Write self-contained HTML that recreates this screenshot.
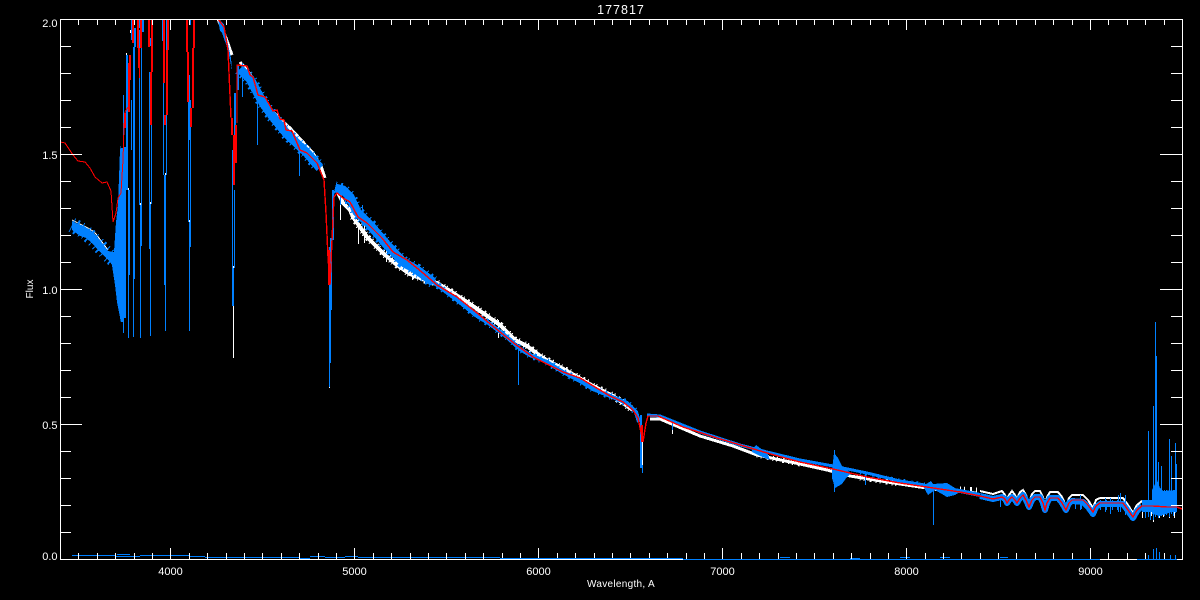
<!DOCTYPE html>
<html><head><meta charset="utf-8"><title>177817</title>
<style>html,body{margin:0;padding:0;background:#000;width:1200px;height:600px;overflow:hidden}svg{display:block}text{font-family:"Liberation Sans",sans-serif;fill:#fff}</style></head>
<body>
<svg width="1200" height="600" viewBox="0 0 1200 600" xmlns="http://www.w3.org/2000/svg">
<rect width="1200" height="600" fill="#000"/>
<clipPath id="c"><rect x="60" y="19" width="1122" height="541"/></clipPath>
<g clip-path="url(#c)" shape-rendering="crispEdges" fill="none">
<!-- white spectrum -->
<path stroke="#fff" stroke-width="3" d="M218,19 L226,38 L232,55 M240,62 L250,74 L260,94 L270,109 L280,119 L290,128 L303,142 L313,153 L321,166 L325,178"/>
<path stroke="#fff" stroke-width="4" d="M337,190 L343,203 L350,210 L353,217 L367,237 L383,253 L397,265 L410,274 L425,280 L437,283 L450,291 L473,306 L500,325 L515,340 L527,346 L543,358 L567,371 L593,386 L613,396 L633,410"/>
<path stroke="#fff" stroke-width="7" stroke-dasharray="1 4 2 3 1 6 1 2" d="M353,217 L367,237 L383,253 L397,265 L410,274 L425,280 L437,283 L450,291 L473,306 L500,325 L515,340 L527,346 L543,358 L567,371 L593,386 L613,396 L633,410"/>
<path stroke="#fff" stroke-width="3" d="M650,419 L660,419 L700,436 L733,446 L757,455 L800,464 L827,470 L850,476 L900,484 L940,490 L977,493"/>
<path stroke="#fff" stroke-width="5" stroke-dasharray="1 3 1 5 2 4" d="M757,455 L800,464 M860,478 L900,484 M960,489 L977,490"/>
<path stroke="#fff" stroke-width="2" d="M980,491 L993,494 L1002,491 L1005,495 L1007,499 L1009,495 L1012,491 L1015,495 L1017,499 L1020,492 L1023,490 L1026,495 L1029,503 L1032,494 L1035,491 L1040,491 L1043,497 L1045,506 L1047,497 L1050,492 L1058,492 L1062,497 L1066,506 L1069,498 L1072,495 L1083,495 L1088,500 L1093,508 L1096,500 L1100,498 L1123,498 L1128,505 L1133,513 L1137,505 L1142,501 L1177,503"/>
<path stroke="#fff" stroke-width="1" d="M233.5,306V358 M329.5,300V388 M340.5,190V220 M358.5,218V244 M364.5,225V243 M386.5,250V262 M390.5,250V260 M412.5,268V280 M498.5,320V338 M642.5,440V473 M672.5,425V434 M834.5,470V492 M933.5,495V525 M1153.5,500V522 M1159.5,500V518 M1169.5,500V518 M1148.5,510V517 M1142.5,505V518 M1146.5,505V512 M1163.5,505V517 M1174.5,505V518 M1151.5,505V516"/>
<path stroke="#fff" stroke-width="1" d="M72,220 L78,223 L90,229 L96,234 L102,242 L108,250"/>
<path stroke="#fff" stroke-width="1" d="M123.5,143V146 M128.5,188V191 M133.5,183V186 M140.5,203V206 M150.5,202V205 M165.5,173V176 M189.5,220V223 M233.5,266V269 M126.5,53V56 M130.5,30V33"/>
<!-- blue spectrum -->
<g fill="#0080ff">
<polygon points="72,221 78,224 84,226 90,230 96,235 102,243 108,251 114,252 115,237 116,222 118,205 120,150 121,145 121,323 119,312 117,302 115,285 113,272 112,265 110,262 104,256 98,250 92,243 86,238 80,236 72,230"/>
<polygon points="218,19 224,24 228,44 231,58 232,70 228,50 222,33 220,31"/>
<polygon points="832,470 834,453 838,458 842,466 847,470 851,473 847,477 842,484 835,488 832,478"/>
<polygon points="752,449 756,445 760,448 768,454 770,460 760,456 752,452"/>
<polygon points="923,486 931,481 933,484 947,483 955,488 960,492 955,495 947,497 935,490 928,495"/>
<polygon points="1152,490 1157,480 1160,488 1163,491 1177,490 1177,510 1160,516 1152,514"/>
<polygon points="1142,500 1177,500 1177,512 1142,512"/>
</g>
<path stroke="#0080ff" stroke-width="15" stroke-dasharray="1 3 2 4 1 5" d="M72,225 L84,231 L96,242 L108,255 L113,259"/>
<!-- blue continuum -->
<path stroke="#0080ff" stroke-width="9" d="M240,69 L250,79 L263,103 L273,117 L287,134 L307,153 L320,168"/>
<path stroke="#0080ff" stroke-width="13" stroke-dasharray="1 4 2 3 1 5" d="M240,69 L250,79 L263,103 L273,117 L287,134 L307,153 L320,168"/>
<path stroke="#0080ff" stroke-width="9" d="M335,188 L343,190 L350,197 L357,212 L370,225 L387,245 L403,262 L417,270 L433,282"/>
<path stroke="#0080ff" stroke-width="13" stroke-dasharray="1 4 2 3 1 5" d="M335,188 L343,190 L350,197 L357,212 L370,225 L387,245 L403,262 L417,270 L433,282"/>
<path stroke="#0080ff" stroke-width="4" d="M433,282 L457,300 L477,316 L490,324 L507,337 L520,349 L530,355 L547,362 L563,372 L580,381 L593,389 L610,396 L627,403 L636,412 L639,422"/>
<path stroke="#0080ff" stroke-width="7" stroke-dasharray="1 5 2 4 1 7" d="M433,282 L457,300 L477,316 L490,324 L507,337 L520,349 L530,355 L547,362 L563,372 L580,381 L593,389 L610,396 L627,403 L636,412"/>
<path stroke="#0080ff" stroke-width="3" d="M647,415 L660,416 L700,432 L740,445 L767,452 L800,460 L833,466 L867,473 L900,481 L925,485"/>
<path stroke="#0080ff" stroke-width="5" stroke-dasharray="1 4 2 6" d="M860,473 L900,481 L925,485"/>
<path stroke="#0080ff" stroke-width="4" d="M925,486 L940,488 L960,491 L980,495"/>
<path stroke="#0080ff" stroke-width="6" stroke-linejoin="round" d="M980,496 L993,499 L1002,497 L1005,499 L1007,503 L1009,500 L1012,497 L1015,500 L1017,503 L1020,498 L1023,495 L1026,500 L1029,507 L1032,500 L1035,497 L1040,497 L1043,503 L1045,510 L1047,503 L1050,498 L1058,498 L1062,503 L1066,510 L1069,503 L1072,501 L1083,502 L1088,507 L1093,514 L1096,507 L1100,504 L1123,504 L1128,511 L1133,518 L1137,511 L1142,506"/>
<path stroke="#0080ff" stroke-width="10" stroke-dasharray="1 4 2 5" d="M1075,504 L1083,504 M1100,505 L1123,505"/>
<!-- blue absorption columns -->
<path stroke="#0080ff" stroke-width="2" d="M122,148V322 M125,147V318 M127,55V190 M129,190V275 M132,19V40 M134,47V279 M135,28V47 M139,19V28 M140,30V48 M143,19V32 M141,205V246 M150,204V249 M150,38V46 M163,19V41 M164,53V83 M165,175V285 M167,19V50 M187,19V29 M189,75V140 M190,222V247 M190,19V25 M233,268V306 M235,93V150 M238,65V90 M330,247V363 M331,238V310 M333,190V240 M641,415V468 M1156,356V513"/>
<path stroke="#0080ff" stroke-width="1" d="M123.5,95V333 M128.5,190V338 M133.5,275V337 M131.5,100V150 M139.5,48V205 M141.5,48V205 M140.5,245V338 M149.5,72V204 M151.5,72V204 M150.5,245V336 M163.5,83V175 M166.5,50V175 M165.5,280V331 M188.5,140V222 M190.5,100V222 M189.5,245V331 M232.5,150V268 M234.5,190V268 M233.5,300V306 M329.5,360V387 M642.5,465V473 M242.5,63V97 M257.5,102V145 M299.5,147V176 M518.5,345V385 M340.5,190V205 M672.5,423V430 M865.5,475V485 M933.5,487V525 M834.5,450V492 M1148.5,431V517 M1153.5,406V520 M1155.5,322V517 M1158.5,462V518 M1161.5,466V516 M1166.5,490V515 M1169.5,439V517 M1171.5,456V514 M1173.5,490V516 M1175.5,443V513 M1176.5,464V512 M345.5,190V204 M362.5,205V225 M375.5,225V238 M395.5,245V258 M1000.5,495V507 M1080.5,495V510 M1105.5,498V512 M1110.5,498V514 M1118.5,495V512 M1120.5,493V512 M1125.5,495V515 M1145.5,502V518 M1150.5,500V520 M1164.5,490V516"/>
<!-- bottom spectrum -->
<path stroke="#0080ff" stroke-width="1" d="M72,555.5H115 M115,556.5H140 M140,555.5H190 M190,556.5H205 M205,557.5H300 M300,558.5H310 M310,556.5H325 M325,557.5H345 M345,556.5H358 M358,557.5H500 M117,554.5H130 M1153.5,549V559 M1156.5,548V559 M1159.5,552V559 M1148.5,555V559 M1170.5,555V559 M1175.5,555V559 M850,558.5H860 M940,557.5H950 M780,557.5H790 M900,557.5H910 M1000,557.5H1008"/>
<!-- red model -->
<path stroke="#f00" stroke-width="1" d="M60.5,142 L65,143 L73,155 L78,161 L85,162 L90,168 L95,177 L102,183 L107,182 L111,191 L113,222 L116,213 L118,198 L121,193 L123,160 L124,127 L125,112 L128,107"/>
<path stroke="#f00" stroke-width="2" d="M125,113V128 M129,63V112 M130,55V80 M133,19V43 M138,19V48 M139,48V68 M141,19V48 M149,19V47 M151,72V125 M152,19V72 M164,19V83 M165,115V125 M167,50V115 M168,19V50 M187,19V52 M188,52V102 M191,108V127 M193,48V108 M194,19V48 M232,118V135 M234,135V185 M236,125V163"/>
<path stroke="#f00" stroke-width="1" d="M139.5,68V78"/>
<path stroke="#f00" stroke-width="1.4" d="M218,19 L224,27 L228,50 L230,95 L231,118 M237,123 L237,65 L247,66 L250,75 L253,77 L258,95 L265,97 L273,111 L277,110 L280,119 L284,120 L286,130 L292,131 L300,150 L307,153 L317,163 L324,180 L326,213 L328,257 L330,285 L332,240 L334,197 L337,193 L343,198 L350,202 L358,217 L367,223 L382,238 L393,252 L407,260 L423,273 L437,285 L457,297 L477,313 L500,332 L515,344 L533,357 L563,372 L580,378 L600,390 L610,396 L623,402 L633,410 L638,418 L642,437 L643,442 L646,423 L648,416 L658,416 L683,427 L717,438 L747,447 L767,453 L800,462 L833,469 L867,477 L900,483 L920,486 L940,489 L960,492 L980,496 L993,499 L1002,497 L1005,499 L1007,503 L1009,500 L1012,497 L1015,500 L1017,503 L1020,498 L1023,495 L1026,500 L1029,507 L1032,500 L1035,497 L1040,497 L1043,503 L1045,510 L1047,503 L1050,498 L1058,498 L1062,503 L1066,510 L1069,503 L1072,500 L1083,500 L1088,505 L1093,512 L1096,506 L1100,503 L1123,503 L1128,510 L1133,517 L1137,510 L1142,506 L1153,506 L1167,507 L1177,507 L1182,509"/>
<path stroke="#f00" stroke-width="2" d="M329,250V285 M642,425V442"/>
</g>
<!-- axes -->
<g shape-rendering="crispEdges" fill="none" stroke="#fff" stroke-width="1">
<path d="M60.5,19.5H1182.5V559.5H60.5Z"/>
<path d="M60,46.5H71M60,73.5H71M60,100.5H71M60,127.5H71M60,154.5H82M60,181.5H71M60,208.5H71M60,235.5H71M60,262.5H71M60,289.5H82M60,316.5H71M60,343.5H71M60,370.5H71M60,397.5H71M60,424.5H82M60,451.5H71M60,478.5H71M60,505.5H71M60,532.5H71"/>
<path d="M1182,46.5H1171M1182,73.5H1171M1182,100.5H1171M1182,127.5H1171M1182,154.5H1160M1182,181.5H1171M1182,208.5H1171M1182,235.5H1171M1182,262.5H1171M1182,289.5H1160M1182,316.5H1171M1182,343.5H1171M1182,370.5H1171M1182,397.5H1171M1182,424.5H1160M1182,451.5H1171M1182,478.5H1171M1182,505.5H1171M1182,532.5H1171"/>
<path d="M78.5,19v6M97.5,19v6M115.5,19v6M134.5,19v6M152.5,19v6M170.5,19v11M189.5,19v6M207.5,19v6M226.5,19v6M244.5,19v6M262.5,19v6M281.5,19v6M299.5,19v6M318.5,19v6M336.5,19v6M354.5,19v11M373.5,19v6M391.5,19v6M410.5,19v6M428.5,19v6M446.5,19v6M465.5,19v6M483.5,19v6M502.5,19v6M520.5,19v6M538.5,19v11M557.5,19v6M575.5,19v6M594.5,19v6M612.5,19v6M630.5,19v6M649.5,19v6M667.5,19v6M686.5,19v6M704.5,19v6M722.5,19v11M741.5,19v6M759.5,19v6M778.5,19v6M796.5,19v6M814.5,19v6M833.5,19v6M851.5,19v6M870.5,19v6M888.5,19v6M906.5,19v11M925.5,19v6M943.5,19v6M961.5,19v6M980.5,19v6M998.5,19v6M1016.5,19v6M1035.5,19v6M1053.5,19v6M1072.5,19v6M1090.5,19v11M1108.5,19v6M1127.5,19v6M1145.5,19v6M1164.5,19v6"/>
<path d="M78.5,559v-6M97.5,559v-6M115.5,559v-6M134.5,559v-6M152.5,559v-6M170.5,559v-11M189.5,559v-6M207.5,559v-6M226.5,559v-6M244.5,559v-6M262.5,559v-6M281.5,559v-6M299.5,559v-6M318.5,559v-6M336.5,559v-6M354.5,559v-11M373.5,559v-6M391.5,559v-6M410.5,559v-6M428.5,559v-6M446.5,559v-6M465.5,559v-6M483.5,559v-6M502.5,559v-6M520.5,559v-6M538.5,559v-11M557.5,559v-6M575.5,559v-6M594.5,559v-6M612.5,559v-6M630.5,559v-6M649.5,559v-6M667.5,559v-6M686.5,559v-6M704.5,559v-6M722.5,559v-11M741.5,559v-6M759.5,559v-6M778.5,559v-6M796.5,559v-6M814.5,559v-6M833.5,559v-6M851.5,559v-6M870.5,559v-6M888.5,559v-6M906.5,559v-11M925.5,559v-6M943.5,559v-6M961.5,559v-6M980.5,559v-6M998.5,559v-6M1016.5,559v-6M1035.5,559v-6M1053.5,559v-6M1072.5,559v-6M1090.5,559v-11M1108.5,559v-6M1127.5,559v-6M1145.5,559v-6M1164.5,559v-6"/>
</g>
<g shape-rendering="crispEdges" fill="none" stroke="#0080ff" stroke-width="1">
<path d="M683,559.5H1100 M1137,559.5H1177"/>
<path d="M500,558.5H683"/>
</g>
<!-- labels -->
<text x="621" y="14" font-size="12.5" letter-spacing="1" text-anchor="middle">177817</text>
<g font-size="11" text-anchor="middle">
<text x="170.5" y="575">4000</text>
<text x="354.5" y="575">5000</text>
<text x="538.5" y="575">6000</text>
<text x="722.5" y="575">7000</text>
<text x="906.5" y="575">8000</text>
<text x="1090.5" y="575">9000</text>
</g>
<g font-size="11" text-anchor="end">
<text x="57.5" y="27">2.0</text>
<text x="57.5" y="159">1.5</text>
<text x="57.5" y="294">1.0</text>
<text x="57.5" y="429">0.5</text>
<text x="57.5" y="560">0.0</text>
</g>
<text x="621" y="587" font-size="10" letter-spacing=".3" text-anchor="middle">Wavelength, A</text>
<text transform="translate(33,289) rotate(-90)" font-size="10" text-anchor="middle">Flux</text>
</svg>
</body></html>
